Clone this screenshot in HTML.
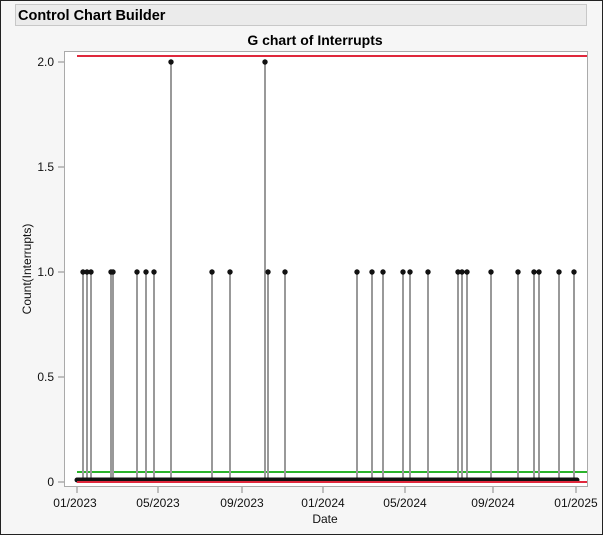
<html><head><style>body{margin:0;background:#f6f6f6;font-family:"Liberation Sans",sans-serif}</style></head><body>
<svg width="603" height="535" xmlns="http://www.w3.org/2000/svg" font-family="Liberation Sans, sans-serif">
<rect x="0.5" y="0.5" width="602" height="534" fill="#f6f6f6" stroke="#222"/>
<rect x="15.5" y="4.5" width="571" height="21" fill="#ebebeb" stroke="#c8c8c8"/>
<text x="18" y="20" font-size="14.5" font-weight="bold" fill="#000">Control Chart Builder</text>
<text x="315" y="45" font-size="14" font-weight="bold" text-anchor="middle">G chart of Interrupts</text>
<rect x="64.5" y="51.5" width="523" height="435" fill="#fff" stroke="#aaa"/>
<g stroke="#888"><line x1="58" x2="64" y1="62" y2="62"/><line x1="58" x2="64" y1="167" y2="167"/><line x1="58" x2="64" y1="272" y2="272"/><line x1="58" x2="64" y1="377" y2="377"/><line x1="58" x2="64" y1="482" y2="482"/>
<line x1="77" x2="77" y1="487" y2="493"/><line x1="158" x2="158" y1="487" y2="493"/><line x1="242" x2="242" y1="487" y2="493"/><line x1="323" x2="323" y1="487" y2="493"/><line x1="405" x2="405" y1="487" y2="493"/><line x1="493" x2="493" y1="487" y2="493"/><line x1="576" x2="576" y1="487" y2="493"/></g>
<g font-size="12" fill="#111" text-anchor="end"><text x="54" y="66">2.0</text><text x="54" y="171">1.5</text><text x="54" y="276">1.0</text><text x="54" y="381">0.5</text><text x="54" y="486">0</text></g>
<g font-size="12" fill="#111" text-anchor="middle"><text x="75" y="507">01/2023</text><text x="158" y="507">05/2023</text><text x="242" y="507">09/2023</text><text x="323" y="507">01/2024</text><text x="405" y="507">05/2024</text><text x="493" y="507">09/2024</text><text x="576" y="507">01/2025</text>
<text x="325" y="523">Date</text>
<text transform="translate(31,269) rotate(-90)">Count(Interrupts)</text></g>
<line x1="77" x2="587" y1="56" y2="56" stroke="#e0283c" stroke-width="2"/>
<line x1="77" x2="587" y1="472" y2="472" stroke="#2bb32b" stroke-width="2"/>
<g stroke="#999" stroke-width="2" fill="none">
<line x1="171" x2="171" y1="62" y2="482"/><line x1="265" x2="265" y1="62" y2="482"/>
<path d="M83 272V482M87 272V482M91 272V482M111 272V482M113 272V482M137 272V482M146 272V482M154 272V482M212 272V482M230 272V482M268 272V482M285 272V482M357 272V482M372 272V482M383 272V482M403 272V482M410 272V482M428 272V482M458 272V482M462 272V482M467 272V482M491 272V482M518 272V482M534 272V482M539 272V482M559 272V482M574 272V482"/>
</g>
<line x1="77" x2="577" y1="480" y2="480" stroke="#111" stroke-width="5" stroke-linecap="round"/>
<line x1="77" x2="587" y1="482" y2="482" stroke="#e0283c" stroke-width="2"/>
<g fill="#111">
<circle cx="171" cy="62" r="2.7"/><circle cx="265" cy="62" r="2.7"/>
<circle cx="83" cy="272" r="2.7"/><circle cx="87" cy="272" r="2.7"/><circle cx="91" cy="272" r="2.7"/><circle cx="111" cy="272" r="2.7"/><circle cx="113" cy="272" r="2.7"/><circle cx="137" cy="272" r="2.7"/><circle cx="146" cy="272" r="2.7"/><circle cx="154" cy="272" r="2.7"/><circle cx="212" cy="272" r="2.7"/><circle cx="230" cy="272" r="2.7"/><circle cx="268" cy="272" r="2.7"/><circle cx="285" cy="272" r="2.7"/><circle cx="357" cy="272" r="2.7"/><circle cx="372" cy="272" r="2.7"/><circle cx="383" cy="272" r="2.7"/><circle cx="403" cy="272" r="2.7"/><circle cx="410" cy="272" r="2.7"/><circle cx="428" cy="272" r="2.7"/><circle cx="458" cy="272" r="2.7"/><circle cx="462" cy="272" r="2.7"/><circle cx="467" cy="272" r="2.7"/><circle cx="491" cy="272" r="2.7"/><circle cx="518" cy="272" r="2.7"/><circle cx="534" cy="272" r="2.7"/><circle cx="539" cy="272" r="2.7"/><circle cx="559" cy="272" r="2.7"/><circle cx="574" cy="272" r="2.7"/>
</g>
</svg>
</body></html>
